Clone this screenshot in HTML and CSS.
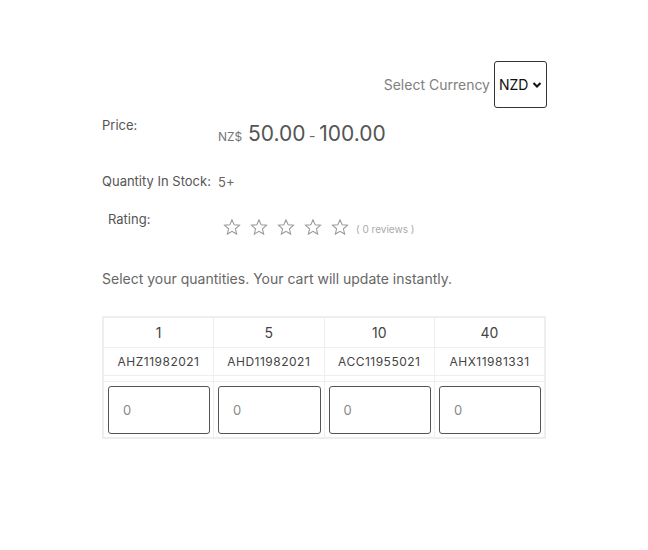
FILE: index.html
```html
<!DOCTYPE html>
<html lang="en">
<head>
    <meta charset="UTF-8">
    <meta name="viewport" content="width=device-width, initial-scale=1.0">
    <title>Product</title>
    <link rel="stylesheet" href="styles.css">
</head>
<body>
    <div class="product">
        <div class="currency">
            <label for="currency">Select Currency</label>
            <div class="select-wrap">
                <select id="currency" class="currency-select">
                    <option>NZD</option>
                </select>
                <svg class="chevron" viewBox="0 0 10 10"><path d="M1.5 3l3.5 3.5L8.5 3"/></svg>
            </div>
        </div>

        <div class="row row-price">
            <div class="label">Price:</div>
            <div class="value">
                <span class="symbol">NZ$</span>
                <span class="amount">50.00</span>
                <span class="dash">-</span>
                <span class="amount">100.00</span>
            </div>
        </div>

        <div class="row row-stock">
            <div class="label">Quantity In Stock:</div>
            <div class="value">5+</div>
        </div>

        <div class="row row-rating">
            <div class="label">Rating:</div>
            <div class="value stars">
                <svg class="star" viewBox="0 0 24 24"><path d="M12 2.5l2.9 6.6 7.1.6-5.4 4.7 1.6 7-6.2-3.7-6.2 3.7 1.6-7L2 9.7l7.1-.6z"/></svg>
                <svg class="star" viewBox="0 0 24 24"><path d="M12 2.5l2.9 6.6 7.1.6-5.4 4.7 1.6 7-6.2-3.7-6.2 3.7 1.6-7L2 9.7l7.1-.6z"/></svg>
                <svg class="star" viewBox="0 0 24 24"><path d="M12 2.5l2.9 6.6 7.1.6-5.4 4.7 1.6 7-6.2-3.7-6.2 3.7 1.6-7L2 9.7l7.1-.6z"/></svg>
                <svg class="star" viewBox="0 0 24 24"><path d="M12 2.5l2.9 6.6 7.1.6-5.4 4.7 1.6 7-6.2-3.7-6.2 3.7 1.6-7L2 9.7l7.1-.6z"/></svg>
                <svg class="star" viewBox="0 0 24 24"><path d="M12 2.5l2.9 6.6 7.1.6-5.4 4.7 1.6 7-6.2-3.7-6.2 3.7 1.6-7L2 9.7l7.1-.6z"/></svg>
                <span class="reviews">( 0 reviews )</span>
            </div>
        </div>

        <p class="hint">Select your quantities. Your cart will update instantly.</p>

        <table class="qty-table">
            <tr class="qty-head">
                <td>1</td>
                <td>5</td>
                <td>10</td>
                <td>40</td>
            </tr>
            <tr class="qty-code">
                <td>AHZ11982021</td>
                <td>AHD11982021</td>
                <td>ACC11955021</td>
                <td>AHX11981331</td>
            </tr>
            <tr class="qty-spacer">
                <td></td><td></td><td></td><td></td>
            </tr>
            <tr class="qty-inputs">
                <td><input type="text" value="0"></td>
                <td><input type="text" value="0"></td>
                <td><input type="text" value="0"></td>
                <td><input type="text" value="0"></td>
            </tr>
        </table>
    </div>
</body>
</html>
```

FILE: styles.css
```css
body {
    font-family: Inter, "Liberation Sans", sans-serif;
    margin: 0;
    padding: 0;
    background-color: #fff;
    color: #555;
}
.product {
    width: 444px;
    margin: 0 auto;
    padding-top: 61px;
}
.currency {
    display: flex;
    justify-content: flex-end;
    align-items: center;
    gap: 4px;
    margin-right: -1px;
}
.currency label {
    font-size: 14px;
    color: #808080;
}
.select-wrap {
    position: relative;
}
.currency-select {
    display: block;
    width: 53px;
    height: 47px;
    appearance: none;
    -webkit-appearance: none;
    font-family: inherit;
    font-size: 14px;
    color: #111;
    border: 1px solid #333;
    border-radius: 3px;
    background: #fff;
    padding: 0 0 0 4px;
}
.chevron {
    position: absolute;
    right: 5px;
    top: 19px;
    width: 10px;
    height: 10px;
    fill: none;
    stroke: #111;
    stroke-width: 2;
    pointer-events: none;
}
.row {
    display: flex;
    align-items: flex-start;
}
.label {
    width: 116px;
    font-size: 13px;
    color: #555;
}
.value {
    font-size: 13px;
    color: #666;
}
.row-price {
    margin-top: 9px;
}
.row-price .value {
    margin-top: 4px;
}
.symbol {
    font-size: 12px;
    color: #777;
    margin-right: 2px;
}
.amount {
    font-size: 21px;
    color: #555;
}
.dash {
    font-size: 14px;
    color: #666;
}
.row-stock {
    margin-top: 27px;
}
.row-stock .value {
    margin-top: 1px;
}
.row-rating {
    margin-top: 21px;
}
.row-rating .label {
    padding-left: 6px;
    width: 115px;
}
.stars {
    display: flex;
    align-items: center;
    gap: 9px;
    margin-top: 7px;
}
.star {
    width: 18px;
    height: 18px;
    fill: none;
    stroke: #999;
    stroke-width: 1.4;
    stroke-linejoin: miter;
}
.reviews {
    font-size: 10px;
    color: #aaa;
    margin-left: -2px;
    margin-top: 4px;
}
.hint {
    font-size: 14px;
    color: #666;
    margin: 34px 0 0;
}
.qty-table {
    width: 444px;
    margin-top: 29px;
    border-collapse: collapse;
    border: 2px solid #eee;
    table-layout: fixed;
}
.qty-table td {
    border: 1px solid #eee;
    text-align: center;
    padding: 0;
}
.qty-head td {
    height: 29px;
    font-size: 14px;
    color: #444;
}
.qty-code td {
    height: 27px;
    font-size: 12px;
    letter-spacing: 0.5px;
    color: #444;
}
.qty-spacer td {
    height: 5px;
}
.qty-inputs td {
    padding: 4px 3px 3px 4px;
}
.qty-inputs input {
    box-sizing: border-box;
    width: 100%;
    height: 48px;
    border: 1px solid #555;
    border-radius: 3px;
    padding: 0 14px;
    font-family: inherit;
    font-size: 13px;
    color: #888;
}
```
